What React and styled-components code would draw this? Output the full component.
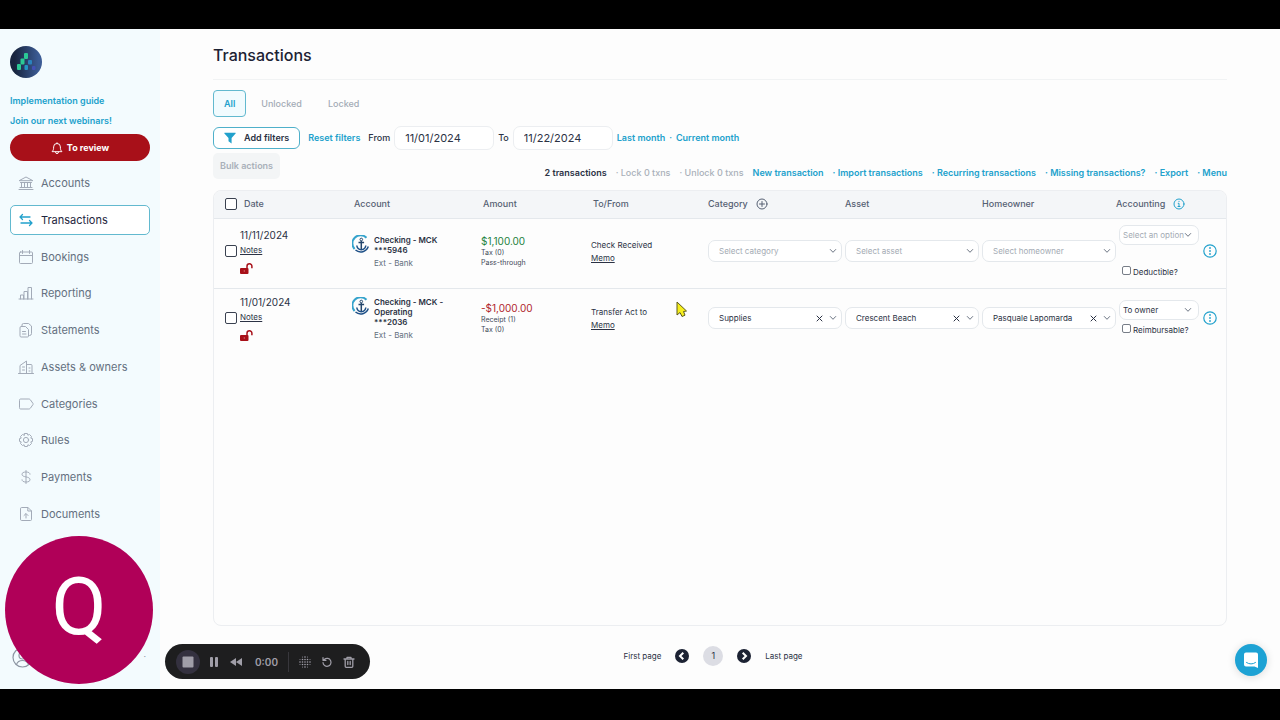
import React from "react";
import styled, { createGlobalStyle, css } from "styled-components";

const teal = "#22a1cc";
const ink = "#2b3244";
const grey = "#647080";
const line = "#e4e8ec";

const GlobalStyle = createGlobalStyle`
  * {
    box-sizing: border-box;
  }
  body {
    margin: 0;
    background: #000;
    color: ${ink};
    font-family: Inter, "Liberation Sans", sans-serif;
    font-size: 9px;
    line-height: 12px;
  }
  button, input, select {
    font: inherit;
    color: inherit;
    margin: 0;
  }
  button {
    cursor: pointer;
  }
  svg {
    display: block;
    flex-shrink: 0;
  }
`;

const StyledScreen = styled.div`
  position: relative;
  display: flex;
  flex-direction: column;
  min-height: 100vh;
  padding: 29px 0 31px;
`;

const StyledApp = styled.div`
  display: flex;
  flex: 1;
  background: #fdfdfd;
`;

/* ---------- sidebar ---------- */

const StyledSidebar = styled.aside`
  display: flex;
  flex-direction: column;
  width: 160px;
  padding: 17px 10px 0;
  background: #f3fbfe;
`;

const StyledGuides = styled.div`
  display: flex;
  flex-direction: column;
  gap: 8px;
  margin: 17px 0 7px;
`;

const StyledLink = styled.a`
  color: ${teal};
  font-weight: 600;
  text-decoration: none;
  white-space: nowrap;
`;

const StyledReview = styled.button`
  display: flex;
  align-items: center;
  justify-content: center;
  gap: 4px;
  height: 27px;
  margin-bottom: 7px;
  border: 0;
  border-radius: 14px;
  background: #a81019;
  color: #fff;
  font-weight: 700;
`;

const StyledNav = styled.nav`
  display: flex;
  flex: 1;
  flex-direction: column;
  justify-content: space-between;
`;

const StyledNavItem = styled.a`
  display: flex;
  align-items: center;
  gap: 7px;
  height: 30px;
  padding: 0 7px;
  border: 1px solid transparent;
  border-radius: 5px;
  color: ${grey};
  font-size: 11px;
  text-decoration: none;
  & svg {
    color: #a3abb8;
  }
  ${({ $active }) =>
    $active &&
    css`
      border-color: #62b9cf;
      background: #fff;
      color: #1f2640;
      & svg {
        color: ${teal};
      }
    `}
`;

const StyledProfile = styled.button`
  display: flex;
  align-items: center;
  justify-content: space-between;
  height: 64px;
  margin-top: 96px;
  padding: 0 4px 0 2px;
  border: 0;
  background: none;
  color: #8d96a3;
`;

/* ---------- main column ---------- */

const StyledMain = styled.main`
  display: flex;
  flex: 1;
  flex-direction: column;
  min-width: 0;
  padding: 0 53px;
`;

const StyledTitle = styled.h1`
  margin: 0 0 10px;
  padding: 16px 0 14px;
  border-bottom: 1px solid #f1f3f4;
  color: #1c2233;
  font-size: 16px;
  font-weight: 500;
  line-height: 20px;
`;

const StyledTabs = styled.div`
  display: flex;
  gap: 4px;
`;

const StyledTab = styled.button`
  height: 27px;
  padding: 0 10px;
  border: 1px solid ${({ $active }) => ($active ? "#62b9cf" : "transparent")};
  border-radius: 4px;
  background: ${({ $active }) => ($active ? "#f1fbfe" : "none")};
  color: ${({ $active }) => ($active ? teal : "#a3abb5")};
  font-weight: ${({ $active }) => ($active ? 600 : 500)};
`;

const StyledFilters = styled.div`
  display: flex;
  align-items: center;
  gap: 8px;
  margin-top: 9px;
  font-weight: 500;
`;

const StyledFilterButton = styled.button`
  display: flex;
  align-items: center;
  gap: 8px;
  height: 22px;
  padding: 0 10px;
  border: 1px solid #4fb0ca;
  border-radius: 6px;
  background: #fff;
  font-weight: 600;
`;

const StyledDateLabel = styled.label`
  display: flex;
  align-items: center;
  gap: 4px;
  margin-right: -4px;
`;

const StyledDate = styled.input`
  width: 100px;
  height: 24px;
  padding: 0 10px;
  border: 1px solid #eceef1;
  border-radius: 7px;
  background: #fff;
  font-size: 11px;
  font-weight: 400;
`;

const StyledMonths = styled.span`
  display: flex;
  gap: 4px;
  color: ${teal};
`;

const StyledToolbar = styled.div`
  display: flex;
  align-items: flex-end;
  justify-content: space-between;
  margin: 3px 0 11px;
`;

const StyledBulk = styled.button`
  height: 26px;
  padding: 0 7px;
  border: 0;
  border-radius: 5px;
  background: #f3f5f6;
  color: #a9b0b9;
  font-weight: 600;
`;

const StyledActions = styled.div`
  display: flex;
  gap: 9px;
  font-weight: 600;
  white-space: nowrap;
`;

const StyledMuted = styled.span`
  color: #a9b0b9;
  font-weight: 500;
`;

const StyledPanel = styled.section`
  flex: 1;
  border: 1px solid #eceef1;
  border-radius: 8px;
  overflow: hidden;
`;

const StyledTable = styled.table`
  width: 100%;
  table-layout: fixed;
  border-collapse: collapse;
`;

const StyledTh = styled.th`
  height: 27px;
  padding: 0 0 0 ${({ $indent }) => $indent || 0}px;
  border-bottom: 1px solid ${line};
  background: #f4f6f8;
  color: #566173;
  font-weight: 500;
  text-align: left;
`;

const StyledHead = styled.span`
  display: flex;
  align-items: center;
  gap: 8px;
`;

const StyledRow = styled.tr`
  & + & {
    border-top: 1px solid ${line};
  }
`;

const StyledTd = styled.td`
  height: ${({ $tall }) => ($tall ? 70 : 64)}px;
  padding: 0 0 4px ${({ $indent }) => $indent || 0}px;
  vertical-align: middle;
`;

const StyledCheck = styled.input`
  appearance: none;
  display: block;
  width: ${({ $small }) => ($small ? 9 : 12)}px;
  height: ${({ $small }) => ($small ? 9 : 12)}px;
  border: 1px solid ${({ $small }) => ($small ? "#777d87" : "#3a4150")};
  border-radius: 2px;
  background: #fff;
  flex-shrink: 0;
`;

const StyledStack = styled.div`
  display: flex;
  flex-direction: column;
  align-items: flex-start;
  gap: ${({ $gap }) => $gap || 0}px;
`;

const StyledDay = styled.span`
  font-size: 10px;
`;

const StyledNote = styled.a`
  color: ${ink};
  font-size: 8px;
  text-decoration: underline;
`;

const StyledAccount = styled.div`
  display: flex;
  gap: 4px;
`;

const StyledAccountName = styled.div`
  max-width: 80px;
  margin-bottom: 3px;
  font-size: 8px;
  font-weight: 600;
  line-height: 10px;
`;

const StyledSmall = styled.div`
  color: ${({ $soft }) => ($soft ? grey : "#3f4858")};
  font-size: ${({ $soft }) => ($soft ? 8 : 7)}px;
  line-height: 10px;
`;

const StyledAmount = styled.div`
  color: ${({ $negative }) => ($negative ? "#b0252c" : "#1d8240")};
  font-size: 10px;
  line-height: 14px;
`;

const StyledPayee = styled.div`
  font-size: 8px;
`;

const StyledField = styled.div`
  display: flex;
  align-items: center;
  gap: ${({ $compact }) => ($compact ? 0 : 6)}px;
  height: ${({ $compact }) => ($compact ? 20 : 22)}px;
  margin-right: ${({ $last }) => ($last ? 0 : 3)}px;
  padding: ${({ $compact }) => ($compact ? "0 6px 0 3px" : "0 4px 0 10px")};
  border: 1px solid ${line};
  border-radius: 7px;
  background: #fff;
  color: #6c7583;
`;

const StyledSelect = styled.select`
  appearance: none;
  flex: 1;
  min-width: 0;
  padding: 0;
  border: 0;
  outline: 0;
  background: none;
  color: ${({ $empty }) => ($empty ? "#a3aab3" : ink)};
  font-size: 8px;
`;

const StyledIconButton = styled.button`
  display: flex;
  padding: 0;
  border: 0;
  background: none;
  color: ${({ $dark }) => ($dark ? ink : teal)};
`;

const StyledLock = styled(StyledIconButton)`
  margin-top: 4px;
`;

const StyledOption = styled.label`
  display: flex;
  gap: 2px;
  margin-left: 3px;
  font-size: 8px;
`;

const StyledAccounting = styled.div`
  display: flex;
  flex-direction: column;
  gap: ${({ $loose }) => ($loose ? 21 : 4)}px;
  padding-right: 4px;
`;

const StyledPager = styled.nav`
  display: flex;
  align-items: center;
  justify-content: center;
  gap: 14px;
  height: 63px;
  margin-left: -14px;
  padding-bottom: 4px;
  font-size: 8px;
`;

const StyledPage = styled.button`
  width: 20px;
  height: 20px;
  padding: 0;
  border: 0;
  border-radius: 50%;
  background: #dcdde4;
  font-size: 9px;
`;

const StyledPageText = styled.button`
  padding: 0;
  border: 0;
  background: none;
`;

/* ---------- things floating above the page ---------- */

const StyledAvatar = styled.div`
  position: absolute;
  bottom: 36px;
  left: 5px;
  display: flex;
  align-items: center;
  justify-content: center;
  width: 148px;
  height: 148px;
  padding-bottom: 6px;
  border-radius: 50%;
  background: #b00058;
  color: #fff;
  font-family: Roboto, "Liberation Sans", sans-serif;
  font-size: 80px;
  line-height: 80px;
`;

const StyledRecorder = styled.div`
  position: absolute;
  bottom: 41px;
  left: 165px;
  display: flex;
  align-items: center;
  gap: 10px;
  height: 35px;
  padding: 0 15px 0 11px;
  border-radius: 18px;
  background: #1e1e1f;
  color: #a09ea8;
`;

const StyledTime = styled.span`
  padding-left: 3px;
  font-size: 10px;
  font-weight: 600;
`;

const StyledRecorderButton = styled.button`
  display: flex;
  align-items: center;
  justify-content: center;
  padding: 0;
  border: 0;
  background: none;
  ${({ $round }) =>
    $round &&
    css`
      width: 24px;
      height: 24px;
      border-radius: 50%;
      background: #34313f;
    `}
`;

const StyledDivider = styled.span`
  width: 1px;
  height: 20px;
  background: #38373c;
`;

const StyledChat = styled.button`
  position: absolute;
  right: 13px;
  bottom: 44px;
  display: flex;
  align-items: center;
  justify-content: center;
  width: 32px;
  height: 32px;
  padding: 0;
  border: 0;
  border-radius: 50%;
  background: #1da2d4;
  box-shadow: 0 1px 8px rgba(0, 0, 0, 0.14);
`;

const StyledCursor = styled.svg`
  position: absolute;
  top: 301px;
  left: 676px;
`;

/* ---------- icons ---------- */

const Line = ({ size = 16, box = 16, width = 1, children }) => (
  <svg
    width={size}
    height={size}
    viewBox={`0 0 ${box} ${box}`}
    fill="none"
    stroke="currentColor"
    strokeWidth={width}
    strokeLinecap="round"
    strokeLinejoin="round"
    aria-hidden="true"
  >
    {children}
  </svg>
);

const Bank = () => (
  <Line>
    <path d="M1.5 5.5 8 2l6.500 3.500zM2.500 7.500h11M3.500 7.500v5M6.500 7.500v5M9.500 7.500v5M12.500 7.500v5M2 12.500h12M1 14.500h14" />
  </Line>
);
const Swap = () => (
  <Line width={1.3}>
    <path d="M4.500 2.500 2 5l2.500 2.500M2 5h10M11.500 8.500 14 11l-2.500 2.500M14 11H3" />
  </Line>
);
const Calendar = () => (
  <Line>
    <path d="M2.500 3h11a1 1 0 0 1 1 1v9.500a1 1 0 0 1-1 1h-11a1 1 0 0 1-1-1V4a1 1 0 0 1 1-1zM1.500 6.500h13M4.500 1.500v3M11.500 1.500v3" />
  </Line>
);
const Bars = () => (
  <Line>
    <path d="M1 14h14M2.500 14v-4h3v4M6 14V6.500h3.500V14M10 14V2.500h3.500V14" />
  </Line>
);
const Papers = () => (
  <Line>
    <path d="M2 5.500a1 1 0 0 1 1-1h4.500l3 3V14a1 1 0 0 1-1 1H3a1 1 0 0 1-1-1zM4 4.500V3a1.500 1.500 0 0 1 1.500-1.500h5L13.500 4v7.500a2 2 0 0 1-2 2h-1M4.500 9.500h3M4.500 12h3.500" />
  </Line>
);
const Buildings = () => (
  <Line>
    <path d="M.5 14.500h15M2 14.500V6.500L8.500 2v12.500M8.500 5.500H13a1 1 0 0 1 1 1v8M4.500 8h2M4.500 11h2M11 9h1M11 12h1" />
  </Line>
);
const Label = () => (
  <Line>
    <path d="M1.500 4A1 1 0 0 1 2.500 3h8.300a2 2 0 0 1 1.600.8L15 7.500q.3.500 0 1l-2.600 3.700a2 2 0 0 1-1.600.8H2.500a1 1 0 0 1-1-1z" />
  </Line>
);
const Gear = () => (
  <Line>
    <circle cx="8" cy="8" r="2.600" />
    <path d="M6.600 1.500h2.800l.5 1.700 1.600-.7 2 2-.7 1.600 1.700.5v2.800l-1.700.5.7 1.600-2 2-1.600-.7-.5 1.700H6.600l-.5-1.700-1.600.7-2-2 .7-1.600-1.700-.5V6.600l1.700-.5-.7-1.600 2-2 1.600.7z" />
  </Line>
);
const Dollar = () => (
  <Line>
    <path d="M8 1.500v13M12 5.200C12 3.800 10.500 3 8 3S4 3.800 4 5.300C4 8.800 12 7 12 10.700 12 12.200 10.500 13 8 13s-4-.8-4-2.200" />
  </Line>
);
const Upload = () => (
  <Line>
    <path d="M2.500 2.500a1 1 0 0 1 1-1H10L13.500 5v8.500a1 1 0 0 1-1 1h-9a1 1 0 0 1-1-1zM9.800 1.500V5h3.700M8 12V8M6 9.500 8 7.500l2 2" />
  </Line>
);
const Bell = () => (
  <Line size={12}>
    <path
      strokeWidth="1.300"
      d="M1.800 12.500c1.500-1.700 1.700-3 1.700-6a4.500 4.500 0 0 1 9 0c0 3 .2 4.300 1.700 6zM6 13.500a2 2 0 0 0 4 0M8 1v1"
    />
  </Line>
);
const Chevron = () => (
  <Line size={8} box={8} width={1}>
    <path d="M1.300 2.500 4 5.300l2.700-2.800" />
  </Line>
);
const Cross = () => (
  <Line size={7} box={7} width={1}>
    <path d="M1 1l5 5M6 1 1 6" />
  </Line>
);
const PlusCircle = () => (
  <Line size={12} box={12}>
    <circle cx="6" cy="6" r="5" />
    <path d="M6 3.500v5M3.500 6h5" />
  </Line>
);
const InfoCircle = () => (
  <Line size={12} box={12}>
    <circle cx="6" cy="6" r="5" />
    <path d="M5.200 5.300H6v3M5 8.500h2M6 3.300v.2" />
  </Line>
);
const More = () => (
  <Line size={14} box={14} width={1.2}>
    <circle cx="7" cy="7" r="6.200" />
    <path strokeWidth="1.800" d="M7 4v.01M7 7v.01M7 10v.01" />
  </Line>
);
const Person = () => (
  <Line size={21} box={21} width={1.200}>
    <circle cx="10.500" cy="10.500" r="9.500" />
    <circle cx="10.500" cy="8.500" r="3.500" />
    <path d="M4.500 17.500c1-3 3-4 6-4s5 1 6 4" />
  </Line>
);
const Undo = () => (
  <Line size={12} box={12} width={1.200}>
    <path d="M2 6.500a4 4 0 1 0 1.500-3.300L2 4.300M2 1.500v2.800h3" />
  </Line>
);
const Trash = () => (
  <Line size={12} box={12} width={1.300}>
    <path d="M1 3h10M4 3V1.300h4V3M2.200 3v7.300a1 1 0 0 0 1 1h5.600a1 1 0 0 0 1-1V3M4.800 5.500v3M7.200 5.500v3" />
  </Line>
);

const Logo = () => (
  <svg width="32" height="32" viewBox="0 0 32 32" role="img" aria-label="Home">
    <defs>
      <linearGradient id="logo" x1="0" x2="1">
        <stop offset="0.15" stopColor="#18253f" />
        <stop offset="0.9" stopColor="#3c5c95" />
      </linearGradient>
    </defs>
    <circle cx="16" cy="16" r="16" fill="url(#logo)" />
    <g fill="#2bc995">
      <rect x="14" y="7" width="4" height="6" rx="1" />
      <rect x="10.500" y="12.500" width="4" height="6" rx="1" />
      <rect x="7" y="18" width="4" height="6" rx="1" />
    </g>
    <rect x="18" y="14" width="4" height="4.500" rx="1" fill="#2a83bd" />
    <rect x="14.500" y="19" width="3.500" height="5" rx="1" fill="#2395c4" />
    <rect x="22" y="20" width="3.500" height="4" rx="1" fill="#4351b5" />
  </svg>
);

const Funnel = () => (
  <svg width="12" height="12" viewBox="0 0 12 12" fill={teal}>
    <path d="M.6.800h10.800q.6.100.2.700L7.600 6v5.500L4.500 9.200V6L.4 1.500Q0 .9.600.800z" />
  </svg>
);

const Unlocked = () => (
  <svg width="13" height="11" viewBox="0 0 13 11">
    <rect y="5" width="8.500" height="6" rx="1" fill="#a81019" />
    <path d="M7 5.500V3.300a2.400 2.400 0 0 1 4.900 0v2" fill="none" stroke="#a81019" strokeWidth="1.500" />
    <circle cx="4.300" cy="8" r=".7" fill="#d8747a" />
  </svg>
);

const Anchor = () => (
  <svg width="18" height="18" viewBox="0 0 18 18" fill="none">
    <path d="M2.600 14A8 8 0 0 1 14.500 2.800" stroke="#35a3cc" strokeWidth="2" />
    <path d="M3.500 15a8 8 0 0 0 12.800-3.500" stroke="#1d4f86" strokeWidth="1.500" />
    <circle cx="9.300" cy="4.500" r="1.300" stroke="#24466c" />
    <path d="M9.300 6v8.500M6.500 7.500h5.600" stroke="#24466c" strokeWidth="1.500" />
    <path d="M4.800 10.500c.3 2.500 2 4 4.500 4.200 2.500-.2 4.200-1.700 4.500-4.200" stroke="#1d4f86" strokeWidth="1.500" />
  </svg>
);

const PageArrow = ({ next }) => (
  <svg width="14" height="14" viewBox="0 0 14 14">
    <circle cx="7" cy="7" r="7" fill="#1c2233" />
    <path
      d={next ? "M5.700 3.700 9 7l-3.300 3.300" : "M8.300 3.700 5 7l3.300 3.300"}
      fill="none"
      stroke="#fff"
      strokeWidth="2"
    />
  </svg>
);

const Dots = () => (
  <svg width="12" height="12" viewBox="0 0 12 12" fill="currentColor">
    {[0, 1, 2, 3, 4].map((row) =>
      [0, 1, 2, 3, 4].map((col) => {
        const edge = Math.abs(row - 2) + Math.abs(col - 2);
        return (
          edge < 4 && (
            <circle
              key={`${row}-${col}`}
              cx={1 + col * 2.5}
              cy={1 + row * 2.5}
              r={edge > 2 ? 0.5 : 0.8}
            />
          )
        );
      })
    )}
  </svg>
);

/* ---------- data ---------- */

const navItems = [
  ["Accounts", Bank],
  ["Transactions", Swap],
  ["Bookings", Calendar],
  ["Reporting", Bars],
  ["Statements", Papers],
  ["Assets & owners", Buildings],
  ["Categories", Label],
  ["Rules", Gear],
  ["Payments", Dollar],
  ["Documents", Upload],
];

const actions = [
  "New transaction",
  "Import transactions",
  "Recurring transactions",
  "Missing transactions?",
  "Export",
  "Menu",
];

const columns = [26, 112, 129, 110, 117, 137, 137, 134, 87, 23];

const transactions = [
  {
    id: 1,
    date: "11/11/2024",
    account: "Checking - MCK",
    number: "***5946",
    amount: "$1,100.00",
    details: ["Tax (0)", "Pass-through"],
    payee: "Check Received",
    accounting: "",
    option: "Deductible?",
  },
  {
    id: 2,
    date: "11/01/2024",
    account: "Checking - MCK - Operating",
    number: "***2036",
    amount: "-$1,000.00",
    negative: true,
    details: ["Receipt (1)", "Tax (0)"],
    payee: "Transfer Act to",
    category: "Supplies",
    asset: "Crescent Beach",
    homeowner: "Pasquale Lapomarda",
    accounting: "To owner",
    option: "Reimbursable?",
  },
];

const Field = ({ label, value, placeholder, compact, last }) => (
  <StyledField $compact={compact} $last={last || compact}>
    <StyledSelect aria-label={label} $empty={!value} defaultValue={value || ""}>
      <option value={value || ""}>{value || placeholder}</option>
    </StyledSelect>
    {!!value && !compact && (
      <StyledIconButton $dark aria-label={`Clear ${label}`}>
        <Cross />
      </StyledIconButton>
    )}
    <Chevron />
  </StyledField>
);

const Sidebar = () => (
  <StyledSidebar>
    <Logo />
    <StyledGuides>
      <StyledLink href="#guide">Implementation guide</StyledLink>
      <StyledLink href="#webinars">Join our next webinars!</StyledLink>
    </StyledGuides>
    <StyledReview>
      <Bell />
      To review
    </StyledReview>
    <StyledNav>
      {navItems.map(([name, NavIcon]) => (
        <StyledNavItem key={name} href="#nav" $active={name === "Transactions"}>
          <NavIcon />
          {name}
        </StyledNavItem>
      ))}
    </StyledNav>
    <StyledProfile aria-label="Profile">
      <Person />
      <span>·</span>
    </StyledProfile>
  </StyledSidebar>
);

const TransactionRow = ({ item, tall }) => (
  <StyledRow>
    <StyledTd $tall={tall} $indent={11}>
      <StyledCheck type="checkbox" aria-label={`Select ${item.date}`} />
    </StyledTd>
    <StyledTd>
      <StyledStack $gap={3}>
        <StyledDay>{item.date}</StyledDay>
        <StyledNote href="#notes">Notes</StyledNote>
        <StyledLock aria-label="Lock">
          <Unlocked />
        </StyledLock>
      </StyledStack>
    </StyledTd>
    <StyledTd>
      <StyledAccount>
        <Anchor />
        <div>
          <StyledAccountName>
            {item.account}
            <br />
            {item.number}
          </StyledAccountName>
          <StyledSmall $soft>Ext - Bank</StyledSmall>
        </div>
      </StyledAccount>
    </StyledTd>
    <StyledTd>
      <StyledAmount $negative={item.negative}>{item.amount}</StyledAmount>
      {item.details.map((detail) => (
        <StyledSmall key={detail}>{detail}</StyledSmall>
      ))}
    </StyledTd>
    <StyledTd>
      <StyledStack $gap={1}>
        <StyledPayee>{item.payee}</StyledPayee>
        <StyledNote href="#memo">Memo</StyledNote>
      </StyledStack>
    </StyledTd>
    <StyledTd>
      <Field label="category" value={item.category} placeholder="Select category" />
    </StyledTd>
    <StyledTd>
      <Field label="asset" value={item.asset} placeholder="Select asset" />
    </StyledTd>
    <StyledTd>
      <Field label="homeowner" value={item.homeowner} placeholder="Select homeowner" last />
    </StyledTd>
    <StyledTd $indent={3}>
      <StyledAccounting $loose={tall}>
        <Field label="accounting" value={item.accounting} placeholder="Select an option" compact />
        <StyledOption>
          <StyledCheck type="checkbox" $small />
          {item.option}
        </StyledOption>
      </StyledAccounting>
    </StyledTd>
    <StyledTd>
      <StyledIconButton aria-label="More">
        <More />
      </StyledIconButton>
    </StyledTd>
  </StyledRow>
);

const Transactions = () => (
  <StyledMain>
    <StyledTitle>Transactions</StyledTitle>
    <StyledTabs>
      <StyledTab $active>All</StyledTab>
      <StyledTab>Unlocked</StyledTab>
      <StyledTab>Locked</StyledTab>
    </StyledTabs>
    <StyledFilters>
      <StyledFilterButton>
        <Funnel />
        Add filters
      </StyledFilterButton>
      <StyledLink href="#reset">Reset filters</StyledLink>
      <StyledDateLabel>
        From
        <StyledDate type="text" defaultValue="11/01/2024" />
      </StyledDateLabel>
      <StyledDateLabel>
        To
        <StyledDate type="text" defaultValue="11/22/2024" />
      </StyledDateLabel>
      <StyledMonths>
        <StyledLink href="#last">Last month</StyledLink>
        <span>·</span>
        <StyledLink href="#current">Current month</StyledLink>
      </StyledMonths>
    </StyledFilters>
    <StyledToolbar>
      <StyledBulk disabled>Bulk actions</StyledBulk>
      <StyledActions>
        <span>2 transactions</span>
        <StyledMuted>· Lock 0 txns</StyledMuted>
        <StyledMuted>· Unlock 0 txns</StyledMuted>
        {actions.map((action, i) => (
          <StyledLink key={action} href="#action">
            {i > 0 && "· "}
            {action}
          </StyledLink>
        ))}
      </StyledActions>
    </StyledToolbar>
    <StyledPanel>
      <StyledTable>
        <colgroup>
          {columns.map((width, i) => (
            <col key={i} width={width} />
          ))}
        </colgroup>
        <thead>
          <tr>
            <StyledTh $indent={11}>
              <StyledCheck type="checkbox" aria-label="Select all" />
            </StyledTh>
            <StyledTh $indent={4}>Date</StyledTh>
            <StyledTh $indent={2}>Account</StyledTh>
            <StyledTh $indent={2}>Amount</StyledTh>
            <StyledTh $indent={2}>To/From</StyledTh>
            <StyledTh>
              <StyledHead>
                Category
                <PlusCircle />
              </StyledHead>
            </StyledTh>
            <StyledTh>Asset</StyledTh>
            <StyledTh>Homeowner</StyledTh>
            <StyledTh colSpan={2}>
              <StyledHead>
                Accounting
                <StyledIconButton aria-label="About accounting">
                  <InfoCircle />
                </StyledIconButton>
              </StyledHead>
            </StyledTh>
          </tr>
        </thead>
        <tbody>
          {transactions.map((item) => (
            <TransactionRow key={item.id} item={item} tall={!item.accounting} />
          ))}
        </tbody>
      </StyledTable>
    </StyledPanel>
    <StyledPager aria-label="Pages">
      <StyledPageText>First page</StyledPageText>
      <StyledIconButton aria-label="Previous page">
        <PageArrow />
      </StyledIconButton>
      <StyledPage>1</StyledPage>
      <StyledIconButton aria-label="Next page">
        <PageArrow next />
      </StyledIconButton>
      <StyledPageText>Last page</StyledPageText>
    </StyledPager>
  </StyledMain>
);

const Recorder = () => (
  <StyledRecorder>
    <StyledRecorderButton $round aria-label="Stop">
      <svg width="12" height="12" viewBox="0 0 12 12">
        <rect x="0.500" y="0.500" width="11" height="11" rx="1" fill="currentColor" />
      </svg>
    </StyledRecorderButton>
    <StyledRecorderButton aria-label="Pause">
      <svg width="10" height="10" viewBox="0 0 10 10" fill="currentColor">
        <rect x="0" width="3" height="10" rx="1" />
        <rect x="5" width="3" height="10" rx="1" />
      </svg>
    </StyledRecorderButton>
    <StyledRecorderButton aria-label="Rewind">
      <svg width="12" height="10" viewBox="0 0 12 10" fill="currentColor">
        <path d="M6 1v8L0 5zM12 1v8L6 5z" />
      </svg>
    </StyledRecorderButton>
    <StyledTime>0:00</StyledTime>
    <StyledDivider />
    <StyledRecorderButton aria-label="Effects">
      <Dots />
    </StyledRecorderButton>
    <StyledRecorderButton aria-label="Restart">
      <Undo />
    </StyledRecorderButton>
    <StyledRecorderButton aria-label="Delete">
      <Trash />
    </StyledRecorderButton>
  </StyledRecorder>
);

const App = () => (
  <StyledScreen>
    <GlobalStyle />
    <StyledApp>
      <Sidebar />
      <Transactions />
    </StyledApp>
    <StyledAvatar>Q</StyledAvatar>
    <Recorder />
    <StyledChat aria-label="Open chat">
      <svg width="16" height="16" viewBox="0 0 16 16">
        <path d="M3 .500h10q2 0 2 2V16l-3.500-1.500H3q-2 0-2-2v-10q0-2 2-2z" fill="#fff" />
        <path d="M3.500 10.500q4.500 3 9 0" fill="none" stroke="#1da2d4" strokeLinecap="round" />
      </svg>
    </StyledChat>
    <StyledCursor width="12" height="17" viewBox="0 0 12 17">
      <path
        d="M1 1v13l3-2.500L6 15.500l3-1.300L7.500 10.500 10.500 10z"
        fill="#f6ee1c"
        stroke="#5c5a1c"
        strokeLinejoin="round"
      />
    </StyledCursor>
  </StyledScreen>
);

export default App;
